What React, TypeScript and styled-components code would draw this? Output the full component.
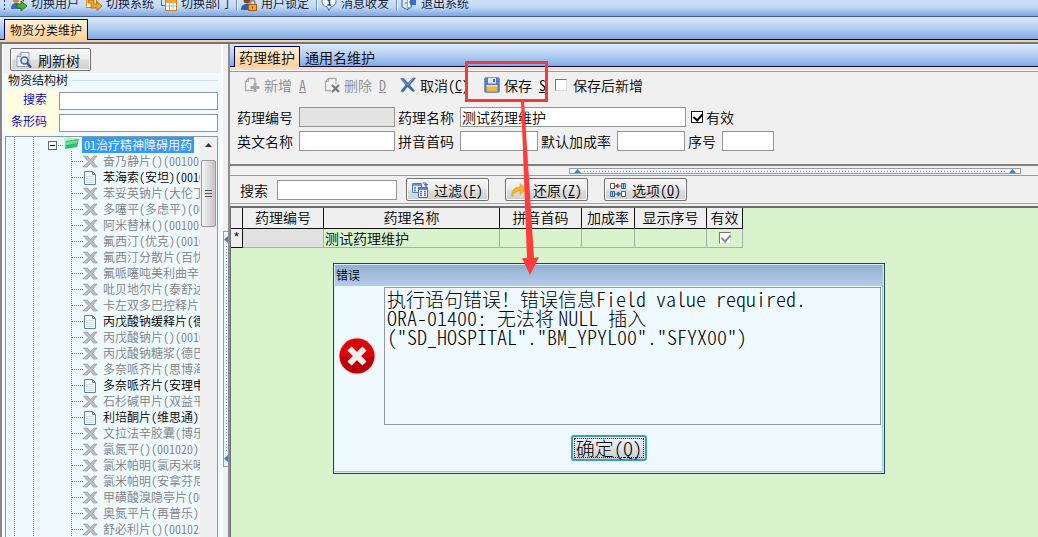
import React from 'react';
import styled, { createGlobalStyle, css } from 'styled-components';

const Global = createGlobalStyle`
  * { box-sizing: border-box; }
  body { margin: 0; background: #f0f0f0; }
  body, button, input, table {
    font-family: "Noto Sans CJK SC", sans-serif;
    font-size: 14px;
    font-weight: 350;
    line-height: 16px;
    color: #000;
  }
  button { border: 0; background: none; padding: 0; white-space: nowrap; }
`;

/* ---------- shared parts ---------- */

/* Latin letters and digits use the font's half-width forms. */
const Latin = styled.span`
  font-feature-settings: "hwid";
`;

const Mixed = ({ text }: { text: string }) => (
  <>
    {text.split(/([\x21-\x7e][\x20-\x7e]*)/).map((part, i) =>
      i % 2 ? <Latin key={i}>{part}</Latin> : part,
    )}
  </>
);

const Icon = styled.svg`
  width: 16px;
  height: 16px;
  flex: none;
  display: block;
`;

const TextInput = styled.input<{ $width?: number }>`
  width: ${p => (p.$width ? `${p.$width}px` : 'auto')};
  height: 20px;
  min-width: 0;
  padding: 0 1px;
  border: 1px solid #949494;
  border-radius: 0;
  background: #fff;
  outline: none;
  &:disabled { background: #e3e3e3; }
`;

const Check = styled.input<{ $look?: 'grey' | 'sunken' }>`
  appearance: none;
  flex: none;
  position: relative;
  width: 12px;
  height: 12px;
  margin: 0;
  background: #fff;
  border: 1px solid #111;
  ${p => p.$look && css`border-color: #777 #ddd #ddd #777;`}
  &:checked::after {
    content: '';
    position: absolute;
    left: 3px;
    top: 0;
    width: 4px;
    height: 7px;
    border: solid ${p => (p.$look === 'grey' ? '#888' : '#000')};
    border-width: 0 2px 2px 0;
    transform: rotate(42deg);
  }
`;

const PushButton = styled.button<{ $width: number }>`
  width: ${p => p.$width}px;
  height: 23px;
  display: flex;
  align-items: center;
  padding: 0 5px;
  gap: 6px;
  border: 1px solid #707070;
  border-radius: 2px;
  background: linear-gradient(#f6f6f6 0%, #ececec 48%, #dedede 52%, #d0d0d0 100%);
  box-shadow: inset 0 0 0 1px #fbfbfb;
`;

/* ---------- page frame ---------- */

const Page = styled.div`
  height: 100vh;
  display: flex;
  flex-direction: column;
  overflow: hidden;
  position: relative;
`;

const MainBar = styled.header`
  flex: none;
  height: 17px;
  padding: 0 3px 5px;
  display: flex;
  align-items: flex-end;
  overflow: hidden;
  background: linear-gradient(#cfe1f8, #c0d8f6 45%, #7ea6de);
  border-bottom: 1px solid #3c5f9c;
`;

const Grip = styled.span`
  width: 3px;
  height: 16px;
  margin-right: 5px;
  background: radial-gradient(circle, #1e3f7c 1px, transparent 1px) 0 0 / 3px 4px;
`;

const MainItem = styled.button`
  display: flex;
  align-items: center;
  gap: 4px;
  margin-right: 7px;
  font-size: 12px;
  font-weight: 400;
  color: #16233f;
`;

const Separator = styled.span`
  width: 2px;
  height: 16px;
  margin-right: 3px;
  background: #6d8fc7;
  border-right: 1px solid #f4f9ff;
`;

const TabStrip = styled.nav<{ $line: string }>`
  flex: none;
  height: 23px;
  display: flex;
  align-items: flex-end;
  padding: 0 4px;
  background: linear-gradient(#dbeafc, #b4cff3 50%, #82abe3);
  border-bottom: 1px solid ${p => p.$line};
`;

const Tab = styled.button<{ $active?: boolean; $small?: boolean }>`
  height: 20px;
  padding: 0 4px;
  border: 1px solid transparent;
  border-bottom: 0;
  ${p => p.$small && css`padding: 0 5px; font-size: 12px;`}
  ${p => p.$active && css`
    margin-bottom: -1px;
    height: 21px;
    border-color: #00006e;
    background: linear-gradient(#fff0d6, #fdd29a);
  `}
`;

const OuterEdge = styled.div`
  flex: none;
  height: 4px;
  background: #fdcf9c;
  border-bottom: 2px solid #757575;
`;

const Columns = styled.div`
  flex: 1;
  min-height: 0;
  display: flex;
  border-left: 2px solid #868686;
`;

/* ---------- left column ---------- */

const Side = styled.aside`
  flex: none;
  width: 221px;
  display: flex;
  flex-direction: column;
  min-height: 0;
  border-left: 1px solid #fff;
  border-right: 2px solid #fff;
`;

const SideTop = styled.div`
  padding: 4px 7px 2px;
`;

const Group = styled.section`
  flex: 1;
  min-height: 0;
  display: flex;
  flex-direction: column;
  padding: 0 3px 0 2px;
  background: #eefaff;
`;

const GroupTitle = styled.h2`
  display: flex;
  align-items: center;
  gap: 4px;
  margin: 0 0 3px;
  padding-left: 3px;
  font-size: 12px;
  line-height: 14px;
  font-weight: 350;
  &::after { content: ''; flex: 1; height: 1px; background: #d3dfe4; }
`;

const SideField = styled.label`
  display: flex;
  align-items: center;
  height: 22px;
  font-size: 12px;
  color: #0000c8;
  & > span {
    width: 54px;
    height: 22px;
    line-height: 18px;
    padding-right: 12px;
    text-align: right;
    background: #fffde0;
  }
  & > input { flex: 1; height: 18px; }
`;

const TreeFrame = styled.div`
  flex: 1;
  min-height: 0;
  display: flex;
  margin-top: 2px;
  border: 1px solid #8c9a9f;
  border-bottom: 0;
`;

const Tree = styled.ul`
  flex: 1;
  min-width: 0;
  margin: 0;
  padding: 0;
  overflow: hidden;
  list-style: none;
`;

const TreeRow = styled.li<{ $muted?: boolean }>`
  display: flex;
  align-items: center;
  height: 16px;
  font-size: 12px;
  white-space: nowrap;
  color: ${p => (p.$muted ? '#808080' : '#000')};
`;

const Selected = styled.span`
  padding: 0 2px;
  background: #3499ff;
  color: #fff;
`;

const ScrollTrack = styled.div`
  flex: none;
  width: 17px;
  background: #efefef;
  display: flex;
  flex-direction: column;
  align-items: center;
`;

const ScrollThumb = styled.div`
  width: 15px;
  height: 67px;
  margin-top: 7px;
  display: flex;
  align-items: center;
  justify-content: center;
  border: 1px solid #9a9a9a;
  border-radius: 2px;
  background: linear-gradient(90deg, #f5f5f5, #dcdcdc 50%, #c3c3c3);
`;

const Splitter = styled.div<{ $row?: boolean }>`
  flex: none;
  display: flex;
  flex-direction: ${p => (p.$row ? 'row' : 'column')};
  ${p => (p.$row
    ? css`height: 10px; padding: 2px 0 1px; border-bottom: 1px solid #9a9a9a;`
    : css`width: 7px; border-right: 2px solid #8d8d8d;`)}
`;

const Spacer = styled.span<{ $grow: number }>`
  flex: ${p => p.$grow} 0 0;
`;

const SplitHandle = styled.div<{ $grow: number; $row?: boolean }>`
  flex: ${p => p.$grow} 0 0;
  display: flex;
  flex-direction: ${p => (p.$row ? 'row' : 'column')};
  align-items: center;
  justify-content: space-between;
  padding: ${p => (p.$row ? '0 4px' : '4px 0')};
  border: 1px solid #a09c96;
  ${p => !p.$row && css`border-right: 0;`}
  background: #eef5fc;
`;

const Dots = styled.span<{ $row?: boolean }>`
  flex: 1;
  ${p => (p.$row
    ? css`height: 1px; margin: 0 3px; background: repeating-linear-gradient(90deg, #5f93cc 0 1px, transparent 1px 3px);`
    : css`width: 1px; margin: 3px 0; background: repeating-linear-gradient(#5f93cc 0 1px, transparent 1px 3px);`)}
`;

const Arrow = styled.svg`
  flex: none;
  display: block;
  fill: #3286c8;
`;

/* ---------- right column ---------- */

const Work = styled.main`
  flex: 1;
  min-width: 0;
  display: flex;
  flex-direction: column;
`;

const InnerEdge = styled.div`
  flex: none;
  height: 5px;
  background: #fbd7c4;
  border-bottom: 1px solid #9b9b8b;
  box-shadow: inset 0 -1px #fff;
`;

const Actions = styled.div`
  display: flex;
  align-items: center;
  height: 26px;
  padding: 0 10px;
`;

const Action = styled.button<{ $width: number }>`
  flex: none;
  width: ${p => p.$width}px;
  display: flex;
  align-items: center;
  gap: 4px;
  padding-left: 4px;
  &:disabled { color: #8c8c8c; }
`;

const Key = styled(Latin)`
  margin-left: 3px;
  text-decoration: underline;
`;

const CheckLabel = styled.label<{ $gap: number }>`
  display: flex;
  align-items: center;
  gap: ${p => p.$gap}px;
`;

const Form = styled.form`
  display: flex;
  flex-direction: column;
  gap: 4px;
  padding: 9px 7px 13px;
  border-bottom: 2px solid #858080;
  ${CheckLabel} { margin-left: 2px; }
`;

const FormRow = styled.div`
  display: flex;
  gap: 3px;
`;

const Field = styled.label`
  display: flex;
  align-items: center;
  gap: 6px;
  white-space: nowrap;
`;

const FilterBar = styled.div`
  display: flex;
  align-items: center;
  gap: 16px;
  height: 28px;
  padding: 0 10px;
  border-bottom: 1px solid #a5a5a5;
  ${Field} { gap: 9px; margin-right: -7px; }
`;

const GridArea = styled.section`
  flex: 1;
  margin-top: 2px;
  border-top: 2px solid #6e6e6e;
  border-left: 1px solid #6e6e6e;
  background: #d9f4cd;
`;

const Grid = styled.table`
  width: 512px;
  table-layout: fixed;
  border-collapse: separate;
  border-spacing: 0;
  th {
    height: 21px;
    padding: 0 0 2px;
    font-weight: 350;
    background: #efefef;
    border: solid #111;
    border-width: 0 1px 1px 0;
    white-space: nowrap;
  }
  td {
    height: 19px;
    padding: 0 1px;
    border: solid #a7b3a2;
    border-width: 0 1px 1px 0;
  }
  tbody th { height: 19px; }
  td:nth-child(2) { background: #e1e1e1; }
  td:last-child { text-align: center; }
`;

/* ---------- dialog and pointer marks ---------- */

const Dialog = styled.section`
  position: absolute;
  left: 333px;
  top: 263px;
  width: 552px;
  display: flex;
  flex-direction: column;
  border: 1px solid #23454d;
  background: #eefaff;
  box-shadow: inset 0 0 0 1px #d9edf8, inset -2px -2px 0 #9cc9dd;
`;

const DialogTitle = styled.h1`
  margin: 1px 2px 0 1px;
  height: 21px;
  padding: 1px 1px 0;
  font-size: 12px;
  line-height: 18px;
  font-weight: 350;
  background: linear-gradient(#94aecf, #b5cdea);
`;

const DialogBody = styled.div`
  display: flex;
  align-items: center;
  gap: 8px;
  padding: 1px 3px 0 4px;
`;

const Message = styled.p`
  flex: 1;
  height: 138px;
  margin: 0;
  padding: 1px 2px;
  border: 1px solid #8e9a9e;
  font-size: 19px;
  line-height: 19px;
  font-weight: 300;
  white-space: pre-line;
  ${Latin} { font-size: 20px; line-height: 0; }
`;

const DialogFoot = styled.div`
  display: flex;
  justify-content: center;
  padding: 10px 0 12px;
`;

const OkButton = styled.button`
  width: 76px;
  height: 26px;
  border: 2px solid #3d9cc6;
  border-radius: 3px;
  background: linear-gradient(#f1f5f7, #dadfe2 60%, #c8cdd0);
  outline: 1px dotted #222;
  outline-offset: -4px;
  font-size: 19px;
  line-height: 20px;
  font-weight: 300;
`;

const Marks = styled.svg`
  position: absolute;
  left: 464px;
  top: 60px;
  width: 86px;
  height: 216px;
  pointer-events: none;
`;

/* ---------- icons ---------- */

const UserSwitchIcon = () => (
  <Icon viewBox="0 0 16 16">
    <circle cx="5" cy="5" r="3" fill="#c98b4a" />
    <path d="M0 14c0-4 2-6 5-6s5 2 5 6z" fill="#3a6dbd" />
    <path d="M8 3l5 0 0 4z" fill="#c94530" />
    <path d="M6 9h4V6l6 5-6 5v-3H6z" fill="#54ad2c" stroke="#1e6614" strokeWidth=".8" />
  </Icon>
);
const SystemSwitchIcon = () => (
  <Icon viewBox="0 0 16 16">
    <rect x="0.5" y="1.500" width="10" height="11" fill="#fff3da" stroke="#d08a2c" />
    <path d="M2 5h6v4h3V6.500l5 4.500-5 4.500V13H5V8H2z" fill="#f7a51e" stroke="#b3620a" strokeWidth=".8" />
  </Icon>
);
const DepartmentIcon = () => (
  <Icon viewBox="0 0 16 16">
    <rect x="0.500" y="1.500" width="9" height="9" fill="#dce9fb" stroke="#3e6db5" />
    <rect x="4.500" y="4.500" width="11" height="11" fill="#fff" stroke="#d07a1c" />
    <path d="M5 5h10v3H5z" fill="#f4a53a" />
    <path d="M5 11h10M8.500 8v7M12 8v7" stroke="#9db7dc" />
  </Icon>
);
const LockUserIcon = () => (
  <Icon viewBox="0 0 16 16">
    <circle cx="6" cy="5" r="3.500" fill="#7b4a28" />
    <path d="M0 15c0-4 2-6 6-6s4 2 4 6z" fill="#2c5fb3" />
    <path d="M9 10V8a2.500 2.500 0 0 1 5 0v2" fill="none" stroke="#8a8a8a" strokeWidth="1.500" />
    <rect x="7.500" y="9.500" width="8" height="6" fill="#f6a437" stroke="#a95a10" />
    <path d="M11.500 11.500v2" stroke="#6b3504" />
  </Icon>
);
const InfoIcon = () => (
  <Icon viewBox="0 0 16 16">
    <path d="M8 .8c4 0 7 2.400 7 5.700 0 2.800-2 4.800-5 5.400L8 15.500 6.500 12C3 11.500 1 9.300 1 6.500 1 3.200 4 .8 8 .8z" fill="#fff" stroke="#4474b8" />
    <path d="M6.500 5.500H8.500V10M6.300 10h4" stroke="#1f4fa5" strokeWidth="1.600" fill="none" />
    <circle cx="8" cy="3.200" r="1" fill="#1f4fa5" />
  </Icon>
);
const ExitIcon = () => (
  <Icon viewBox="0 0 16 16">
    <path d="M1 3l6-2v14l-6-3z" fill="#d8e7fb" stroke="#3b6db8" />
    <path d="M7 3h3v10H7" fill="#fff" stroke="#3b6db8" />
    <path d="M8 7l3-4v2h4v5h-4v2z" fill="#2e6fd0" />
    <circle cx="5" cy="8" r="1" fill="#e28b1b" />
  </Icon>
);
const RefreshTreeIcon = () => (
  <Icon viewBox="0 0 16 16">
    <path d="M5 .5h8v14H1V4.500z" fill="#eef2fa" stroke="#93a1bf" />
    <path d="M5 .5v4H1" fill="#cdd6e8" stroke="#93a1bf" />
    <circle cx="8.500" cy="8.500" r="3.500" fill="#dbe8fa" stroke="#4a6296" strokeWidth="1.600" />
    <path d="M11 11l4 4.500" stroke="#34518c" strokeWidth="2.400" />
  </Icon>
);
const NewIcon = () => (
  <Icon viewBox="0 0 16 16">
    <path d="M11 6V1.500H4.500l-3 3v9H9" fill="#f3f3f3" stroke="#ababab" strokeWidth="1.300" />
    <path d="M4.500 1.500v3h-3" fill="none" stroke="#ababab" />
    <path d="M11 6v9M6.500 10.500h9" stroke="#a9a9a9" strokeWidth="3" />
  </Icon>
);
const DeleteIcon = () => (
  <Icon viewBox="0 0 16 16">
    <path d="M12 7V1.500H4.500l-3 3v9H7" fill="#f3f3f3" stroke="#ababab" strokeWidth="1.300" />
    <path d="M4.500 1.500v3h-3" fill="none" stroke="#ababab" />
    <path d="M8 8l7 7M15 8l-7 7" stroke="#777" strokeWidth="2.200" />
  </Icon>
);
const CancelIcon = () => (
  <Icon viewBox="0 0 16 16">
    <path d="M0 1.500L3.500 1 8 5.800 13 .5l3 .5-6 7 5 6-2 1-5.500-5L3 15.500.5 14 5.500 8z" fill="#416ca9" />
    <path d="M1.500 2l6 6L13 1.500" stroke="#7f9fca" fill="none" />
  </Icon>
);
const SaveIcon = () => (
  <Icon viewBox="0 0 16 16">
    <path d="M1.500.5h13l1 1v13l-1 1h-13l-1-1v-13z" fill="#557fc3" stroke="#7d94bd" />
    <path d="M4 1h8v5.500H4z" fill="#dfe8f5" />
    <path d="M9 2h2v3H9z" fill="#4569a5" />
    <path d="M2.500 8h11v6.500h-11z" fill="#f4b73c" />
    <path d="M2.500 8h11v1.500h-11z" fill="#fadb8c" />
  </Icon>
);
const FilterIcon = () => (
  <Icon viewBox="0 0 16 16">
    <path d="M.5 1.500h9v9h-9z" fill="#e6effb" stroke="#4f7cc4" />
    <path d="M1 3h8M2 6h2M2 8.500h2M6 6h2" stroke="#4f7cc4" strokeWidth="1.400" />
    <path d="M6.500 5.500h9v10h-9z" fill="#fff" stroke="#3f6cb5" />
    <path d="M7 7h8" stroke="#3f6cb5" strokeWidth="1.600" />
    <path d="M8 9.500h2M12 9.500h2M8 11.500h2M12 11.500h2M8 13.500h2M12 13.500h2" stroke="#4f7cc4" strokeWidth="1.300" />
    <path d="M10.500 1h3.500v2.500M12.500 2.500h3L14 4.500z" stroke="#3f6cb5" fill="none" />
  </Icon>
);
const UndoIcon = () => (
  <Icon viewBox="0 0 16 16">
    <path d="M1 15c-1-6 2-10 8-10V1.500l6.500 5.500L9 12.500V9c-4 0-6 2-8 6z" fill="#f4b32d" stroke="#dd9a1d" strokeWidth=".6" />
  </Icon>
);
const OptionsIcon = () => (
  <Icon viewBox="0 0 16 16">
    <path d="M.5 1.500h4v5h-4zM11.500 9.500h4v5h-4z" fill="#fff" stroke="#555" />
    <path d="M11.500 1.500h4v5h-4zM.5 9.500h4v5h-4z" fill="#9ed3ef" stroke="#3d678a" />
    <path d="M13.500 1.500v5M2.500 9.500v5" stroke="#3d678a" />
    <path d="M11 4H6M8 2L5.500 4 8 6z" stroke="#b53a25" fill="#b53a25" />
    <path d="M5 12h5M8 10l2.500 2L8 14z" stroke="#28648e" fill="#28648e" />
  </Icon>
);
const ErrorBadge = styled.svg`
  flex: none;
  width: 38px;
  height: 38px;
`;
const ErrorIcon = () => (
  <ErrorBadge viewBox="0 0 38 38" aria-hidden="true">
    <circle cx="19" cy="19" r="18.500" fill="#f5c9c6" />
    <circle cx="19" cy="19" r="17.500" fill="#d8060b" />
    <path d="M2 19a17 17 0 0 0 34 0c-8 3-26 3-34 0z" fill="#b90005" />
    <path d="M11.500 11.500l15 15M26.500 11.500l-15 15" stroke="#efefef" strokeWidth="6" />
  </ErrorBadge>
);

const GuideArt = styled.svg<{ $width: number }>`
  flex: none;
  width: ${p => p.$width}px;
  height: 16px;
`;

/* Guide lines, expander and node picture in front of a tree entry. */
const Guides = ({ kind }: { kind: 'root' | 'off' | 'doc' }) => (
  <GuideArt $width={kind === 'root' ? 76 : 97} aria-hidden="true">
    <g stroke="#6d7678" strokeDasharray="1 1" fill="none">
      <path d="M8.500 0v16M27.500 0v16" />
      {kind === 'root' ? <path d="M52 8.500h6M65.500 14v2" /> : <path d="M65.500 0v16M66 8.500h11" />}
    </g>
    {kind === 'root' && (
      <>
        <rect x="42.500" y="4.500" width="8" height="8" fill="#fff" stroke="#5d6a70" />
        <path d="M44 8.500h5" stroke="#000" />
        <path d="M58 1l6-1 1 1h7v8l-13 3z" fill="#bdeccb" />
        <path d="M60 4l13-2-2 8-12 2z" fill="#2fbf6c" />
        <path d="M60 5l12-2-1 3-11 2z" fill="#6ddc98" />
      </>
    )}
    {kind === 'off' && (
      <path
        d="M77.500 3h4l3 3.500L88 3h3l-4.500 5.500 5 5.500h-4l-3-3.500-3.500 3.500h-4l5.500-5.500z"
        fill="#bcbcbc"
        stroke="#9a9a9a"
        strokeWidth=".7"
      />
    )}
    {kind === 'doc' && (
      <>
        <path d="M78.500 2.500h8l3 3v10h-11z" fill="#fff" stroke="#5c82b8" />
        <path d="M86.500 2.500v3h3" fill="none" stroke="#5c82b8" />
        <path d="M80 7.500h8M80 9.500h8M80 11.500h8M80 13.500h8" stroke="#cddcf0" />
      </>
    )}
  </GuideArt>
);

/* ---------- data ---------- */

const drugs: [string, boolean?][] = [
  ['奋乃静片()(001001)'],
  ['苯海索(安坦)(001002)', true],
  ['苯妥英钠片(大伦丁)'],
  ['多噻平(多虑平)(001004)'],
  ['阿米替林()(001005)'],
  ['氟西汀(优克)(001006)'],
  ['氟西汀分散片(百忧解)'],
  ['氟哌噻吨美利曲辛片'],
  ['吡贝地尔片(泰舒达)'],
  ['卡左双多巴控释片'],
  ['丙戊酸钠缓释片(德巴金)', true],
  ['丙戊酸钠片()(001012)'],
  ['丙戊酸钠糖浆(德巴金)'],
  ['多奈哌齐片(思博海)'],
  ['多奈哌齐片(安理申)', true],
  ['石杉碱甲片(双益平)'],
  ['利培酮片(维思通)', true],
  ['文拉法辛胶囊(博乐欣)'],
  ['氯氮平()(001020)'],
  ['氯米帕明(氯丙米嗪)'],
  ['氯米帕明(安拿芬尼)'],
  ['甲磺酸溴隐亭片(001023)'],
  ['奥氮平片(再普乐)'],
  ['舒必利片()(001025)'],
];

const columns: [string, number][] = [
  ['', 12],
  ['药理编号', 81],
  ['药理名称', 176],
  ['拼音首码', 82],
  ['加成率', 53],
  ['显示序号', 72],
  ['有效', 36],
];

const Hot = ({ letter }: { letter: string }) => (
  <Latin>(<u>{letter}</u>)</Latin>
);

export default function App() {
  return (
    <Page>
      <Global />
      <MainBar>
        <Grip />
        <MainItem><UserSwitchIcon />切换用户</MainItem>
        <MainItem><SystemSwitchIcon />切换系统</MainItem>
        <MainItem><DepartmentIcon />切换部门</MainItem>
        <Separator />
        <MainItem><LockUserIcon />用户锁定</MainItem>
        <Separator />
        <MainItem><InfoIcon />消息收发</MainItem>
        <Separator />
        <MainItem><ExitIcon />退出系统</MainItem>
      </MainBar>

      <TabStrip $line="#00005a">
        <Tab $active $small>物资分类维护</Tab>
      </TabStrip>
      <OuterEdge />

      <Columns>
        <Side>
          <SideTop>
            <PushButton $width={81}><RefreshTreeIcon />刷新树</PushButton>
          </SideTop>
          <Group>
            <GroupTitle>物资结构树</GroupTitle>
            <SideField><span>搜索</span><TextInput /></SideField>
            <SideField><span>条形码</span><TextInput /></SideField>
            <TreeFrame>
              <Tree>
                <TreeRow>
                  <Guides kind="root" />
                  <Selected><Mixed text="01治疗精神障碍用药" /></Selected>
                </TreeRow>
                {drugs.map(([name, active]) => (
                  <TreeRow key={name} $muted={!active}>
                    <Guides kind={active ? 'doc' : 'off'} />
                    <span><Mixed text={name} /></span>
                  </TreeRow>
                ))}
              </Tree>
              <ScrollTrack>
                <Arrow width="7" height="16"><path d="M0 10l3.500-4L7 10z" fill="#333" /></Arrow>
                <ScrollThumb>
                  <svg width="8" height="9"><path d="M0 1.500h7M0 4.500h7M0 7.500h7" stroke="#555" /></svg>
                </ScrollThumb>
              </ScrollTrack>
            </TreeFrame>
          </Group>
        </Side>

        <Splitter>
          <Spacer $grow={187} />
          <SplitHandle $grow={227}>
            <Arrow width="4" height="7"><path d="M4 0v7L0 3.500z" /></Arrow>
            <Dots />
            <Arrow width="4" height="7"><path d="M4 0v7L0 3.500z" /></Arrow>
          </SplitHandle>
          <Spacer $grow={70} />
        </Splitter>

        <Work>
          <TabStrip $line="#0a0a3c">
            <Tab $active>药理维护</Tab>
            <Tab>通用名维护</Tab>
          </TabStrip>
          <InnerEdge />

          <Actions>
            <Action $width={80} disabled><NewIcon />新增<Key>A</Key></Action>
            <Action $width={76} disabled><DeleteIcon />删除<Key>D</Key></Action>
            <Action $width={84}><CancelIcon /><span>取消<Hot letter="C" /></span></Action>
            <Action $width={75}><SaveIcon />保存<Key>S</Key></Action>
            <CheckLabel $gap={6}><Check type="checkbox" $look="sunken" />保存后新增</CheckLabel>
          </Actions>

          <Form>
            <FormRow>
              <Field>药理编号<TextInput $width={96} disabled /></Field>
              <Field>药理名称<TextInput $width={226} defaultValue="测试药理维护" /></Field>
              <CheckLabel $gap={3}><Check type="checkbox" defaultChecked />有效</CheckLabel>
            </FormRow>
            <FormRow>
              <Field>英文名称<TextInput $width={96} /></Field>
              <Field>拼音首码<TextInput $width={78} /></Field>
              <Field>默认加成率<TextInput $width={68} /></Field>
              <Field>序号<TextInput $width={52} /></Field>
            </FormRow>
          </Form>

          <Splitter $row>
            <Spacer $grow={339} />
            <SplitHandle $row $grow={442}>
              <Arrow width="7" height="4"><path d="M0 4h7L3.500 0z" /></Arrow>
              <Dots $row />
              <Arrow width="7" height="4"><path d="M0 4h7L3.500 0z" /></Arrow>
            </SplitHandle>
            <Spacer $grow={17} />
          </Splitter>

          <FilterBar>
            <Field>搜索<TextInput $width={120} /></Field>
            <PushButton $width={83}><FilterIcon /><span>过滤<Hot letter="F" /></span></PushButton>
            <PushButton $width={83}><UndoIcon /><span>还原<Hot letter="Z" /></span></PushButton>
            <PushButton $width={83}><OptionsIcon /><span>选项<Hot letter="O" /></span></PushButton>
          </FilterBar>

          <GridArea>
            <Grid>
              <colgroup>
                {columns.map(([name, width]) => <col key={name} width={width} />)}
              </colgroup>
              <thead>
                <tr>{columns.map(([name]) => <th key={name} scope="col">{name}</th>)}</tr>
              </thead>
              <tbody>
                <tr>
                  <th scope="row"><Latin>*</Latin></th>
                  <td />
                  <td>测试药理维护</td>
                  <td />
                  <td />
                  <td />
                  <td><Check type="checkbox" $look="grey" defaultChecked aria-label="有效" /></td>
                </tr>
              </tbody>
            </Grid>
          </GridArea>
        </Work>
      </Columns>

      <Dialog role="alertdialog" aria-labelledby="dialog-title">
        <DialogTitle id="dialog-title">错误</DialogTitle>
        <DialogBody>
          <ErrorIcon />
          <Message>
            <Mixed text={'执行语句错误！错误信息Field value required.\n'} />
            <Mixed text={'ORA-01400: 无法将 NULL 插入\n'} />
            <Mixed text={'("SD_HOSPITAL"."BM_YPYL00"."SFYX00")'} />
          </Message>
        </DialogBody>
        <DialogFoot>
          <OkButton>确定<Hot letter="Q" /></OkButton>
        </DialogFoot>
      </Dialog>

      <Marks viewBox="0 0 86 216" aria-hidden="true">
        <rect x="2.500" y="2.500" width="80" height="38" fill="none" stroke="#ee3b3b" strokeWidth="3" />
        <path d="M57 40l3 0 10 158 5-1-9 18-8-17 5 0z" fill="#ff3b3b" />
      </Marks>
    </Page>
  );
}
